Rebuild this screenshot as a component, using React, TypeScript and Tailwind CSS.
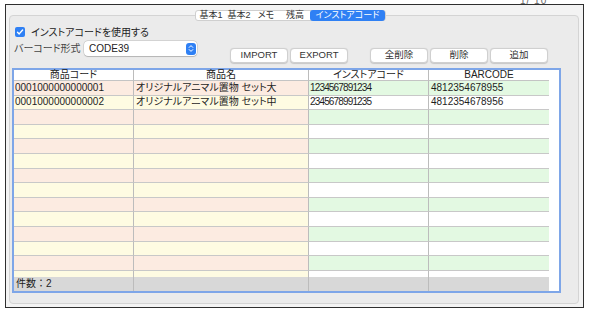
import React from 'react';

const rows = [
  { code: '0001000000000001', name: 'オリジナルアニマル置物 セット大', instore: '1234567891234', barcode: '4812354678955' },
  { code: '0001000000000002', name: 'オリジナルアニマル置物 セット中', instore: '2345678991235', barcode: '4812354678956' },
];

const tabs = [
  { label: '基本1', w: 'w-[30px]' },
  { label: '基本2', w: 'w-[26px]' },
  { label: 'メモ', w: 'w-[28px]' },
  { label: '残高', w: 'w-[30px]' },
];

function Button({ label }: { label: string }) {
  return (
    <div className="w-[58px] h-[15px] bg-white rounded-[4px] border border-[#d0d0d0] shadow-[0_0.5px_1px_rgba(0,0,0,0.15)] flex items-center justify-center text-[9.5px] text-[#333]">
      {label}
    </div>
  );
}

function TableRow({ index }: { index: number }) {
  const r = rows[index];
  const odd = index % 2 === 0;
  const left = odd ? 'bg-[#fcebe1]' : 'bg-[#fefbe2]';
  const right = odd ? 'bg-[#e3f9e2]' : 'bg-white';
  return (
    <div className="flex h-[14.6px] text-[10px] text-[#1e1e1e] leading-none">
      <div className={`w-[120px] border-r border-b border-r-[#bcbcbc] border-b-[#c8c8c8] pl-[1px] flex items-center ${left}`}>{r?.code}</div>
      <div className={`w-[175px] border-r border-b border-r-[#bcbcbc] border-b-[#c8c8c8] pl-[2px] flex items-center ${left}`}>{r?.name}</div>
      <div className={`w-[120px] border-r border-b border-r-[#bcbcbc] border-b-[#c8c8c8] pl-[1px] flex items-center tracking-[-0.85px] ${right}`}>{r?.instore}</div>
      <div className={`w-[120px] border-b border-b-[#c8c8c8] pl-[2px] flex items-center ${right}`}>{r?.barcode}</div>
      <div className="w-[10px] bg-white" />
    </div>
  );
}

export default function App() {
  return (
    <div className="relative w-[592px] h-[311px] bg-white overflow-hidden font-['Liberation_Sans','Noto_Sans_CJK_JP',sans-serif] [font-feature-settings:'palt'] text-[#222]">
      <div className="absolute z-10 left-[520px] top-[-7px] text-[10px] text-[#666] tracking-[1px]">1/ 10</div>
      <div className="ml-[5px] mt-[4px] w-[579px] h-[304px] border border-[#2f2f2f] bg-[#f3f3f3] pt-[10px] pl-[3px]">
        <div className="w-[570px] h-[289px] border border-[#d4d4d4] rounded-[4px] bg-[#ebebeb] flex flex-col">
          {/* tabs */}
          <div className="-mt-[6px] ml-[185px] h-[11px] flex bg-white border border-[#cfcfcf] rounded-[3px] self-start text-[9px] leading-none">
            {tabs.map((t) => (
              <div key={t.label} className={`${t.w} flex items-center justify-center text-[#333]`}>{t.label}</div>
            ))}
            <div className="w-[75px] -my-[1px] flex items-center justify-center bg-[#2f80f4] text-white rounded-[3px]">インストアコード</div>
          </div>

          {/* checkbox row */}
          <div className="mt-[5px] ml-[5px] h-[12px] flex items-center gap-[6px] text-[10px]">
            <div className="w-[10px] h-[10px] rounded-[2px] bg-[#2f80f4] flex items-center justify-center">
              <svg width="8" height="8" viewBox="0 0 8 8">
                <path d="M1.5 4.2 L3.2 5.9 L6.6 2" fill="none" stroke="white" strokeWidth="1.4" strokeLinecap="round" strokeLinejoin="round" />
              </svg>
            </div>
            <span className="text-[#222]">インストアコードを使用する</span>
          </div>

          {/* format + buttons */}
          <div className="mt-[3px] flex items-start">
            <div className="ml-[4px] w-[70px] h-[15px] flex items-center text-[10px] text-[#444]">バーコード形式</div>
            <div className="w-[113px] h-[15px] bg-white rounded-[4px] shadow-[0_0_0_0.5px_rgba(0,0,0,0.18),0_0.5px_1px_rgba(0,0,0,0.15)] flex items-center pl-[5px] pr-[1px] text-[10px] text-[#222]">
              <span className="flex-1">CODE39</span>
              <div className="w-[10px] h-[12px] rounded-[3px] bg-[#2f80f4] flex items-center justify-center">
                <svg width="6" height="9" viewBox="0 0 6 9">
                  <path d="M1.2 3.4 L3 1.6 L4.8 3.4 M1.2 5.6 L3 7.4 L4.8 5.6" fill="none" stroke="white" strokeWidth="1" strokeLinecap="round" strokeLinejoin="round" />
                </svg>
              </div>
            </div>
            <div className="ml-[33px] mt-[7px] flex">
              <div className="flex gap-[2px]">
                <Button label="IMPORT" />
                <Button label="EXPORT" />
              </div>
              <div className="ml-[22px] flex gap-[2px]">
                <Button label="全削除" />
                <Button label="削除" />
                <Button label="追加" />
              </div>
            </div>
          </div>

          {/* table */}
          <div className="mt-[5px] ml-[2px] w-[549px] h-[225px] border-2 border-[#7ea6e8] bg-white flex flex-col">
            <div className="flex h-[11px] text-[10px] leading-none text-[#222] bg-white">
              <div className="w-[120px] border-r border-b border-r-[#bcbcbc] border-b-[#c4c4c4] flex items-center justify-center">商品コード</div>
              <div className="w-[175px] border-r border-b border-r-[#bcbcbc] border-b-[#c4c4c4] flex items-center justify-center">商品名</div>
              <div className="w-[120px] border-r border-b border-r-[#bcbcbc] border-b-[#c4c4c4] flex items-center justify-center">インストアコード</div>
              <div className="w-[120px] border-b border-b-[#c4c4c4] flex items-center justify-center">BARCODE</div>
              <div className="w-[10px] bg-white" />
            </div>
            <div className="h-[196px] overflow-hidden">
              {Array.from({ length: 14 }).map((_, i) => (
                <TableRow key={i} index={i} />
              ))}
            </div>
            <div className="flex h-[14px] text-[10px] leading-none text-[#222]">
              <div className="w-[120px] border-r border-r-[#bcbcbc] bg-[#d8d8d8] pl-[2px] flex items-center [font-feature-settings:normal]">件数：2</div>
              <div className="w-[175px] border-r border-r-[#bcbcbc] bg-[#d8d8d8]" />
              <div className="w-[120px] border-r border-r-[#bcbcbc] bg-[#d8d8d8]" />
              <div className="w-[120px] bg-[#d8d8d8]" />
              <div className="w-[10px] bg-white" />
            </div>
          </div>
        </div>
      </div>
    </div>
  );
}
